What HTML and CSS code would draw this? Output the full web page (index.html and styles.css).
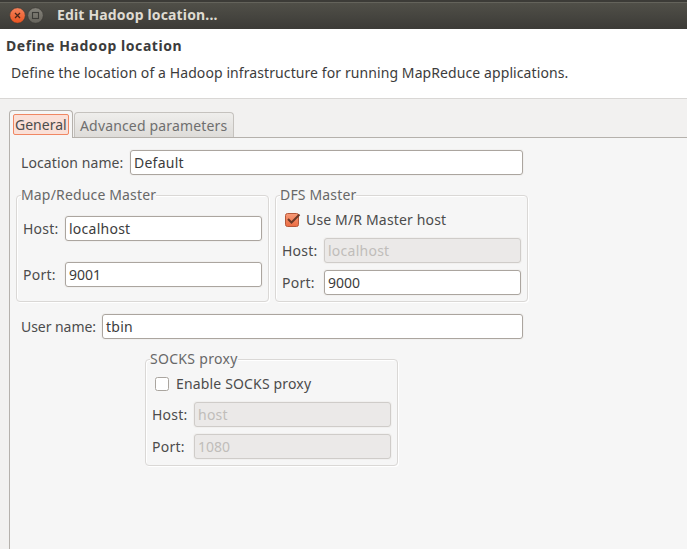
FILE: index.html
```html
<!DOCTYPE html>
<html lang="en">
<head>
<meta charset="utf-8">
<title>Edit Hadoop location...</title>
<link rel="stylesheet" href="styles.css">
</head>
<body>
<div class="titlebar">
  <svg class="window-buttons" width="36" height="18" viewBox="0 0 36 18">
    <defs>
      <linearGradient id="close" x1="0" y1="0" x2="0" y2="1"><stop offset="0" stop-color="#f5835c"/><stop offset="1" stop-color="#e9531f"/></linearGradient>
      <linearGradient id="max" x1="0" y1="0" x2="0" y2="1"><stop offset="0" stop-color="#85837b"/><stop offset="1" stop-color="#66645c"/></linearGradient>
    </defs>
    <circle cx="8.5" cy="9.5" r="7.8" fill="url(#close)" stroke="#3a3833" stroke-width=".7"/>
    <path d="M6 7l5 5M11 7l-5 5" stroke="#4b2619" stroke-width="1.3"/>
    <circle cx="26.5" cy="9.5" r="7.8" fill="url(#max)" stroke="#3a3833" stroke-width=".7"/>
    <rect x="23.5" y="6.5" width="6" height="6" fill="none" stroke="#3c3b37" stroke-width="1.1"/>
  </svg>
  <span class="window-title">Edit Hadoop location...</span>
</div>
<header class="banner">
  <h1 class="banner-title">Define Hadoop location</h1>
  <p class="banner-text">Define the location of a Hadoop infrastructure for running MapReduce applications.</p>
</header>
<main class="content">
  <nav class="tabs">
    <div class="tab-active"><span class="tab-focus">General</span></div>
    <div class="tab-idle">Advanced parameters</div>
  </nav>
  <section class="panel">
    <div class="row row-location"><span class="label">Location name:</span><div class="entry">Default</div></div>
    <div class="groups">
      <div class="group group-mr">
        <div class="legend">Map/Reduce Master</div>
        <div class="row"><span class="label">Host:</span><div class="entry">localhost</div></div>
        <div class="row"><span class="label">Port:</span><div class="entry numeric">9001</div></div>
      </div>
      <div class="group group-dfs">
        <div class="legend">DFS Master</div>
        <div class="check">
          <svg class="box" width="17" height="16" viewBox="0 0 17 16">
            <defs><linearGradient id="chk" x1="0" y1="0" x2="0" y2="1"><stop offset="0" stop-color="#f69a78"/><stop offset="1" stop-color="#ec6c42"/></linearGradient></defs>
            <rect x="1.5" y="1.5" width="13" height="13" rx="2" fill="url(#chk)" stroke="#b5583a"/>
            <path d="M4 7L7.5 10.5L15.5 2.5" fill="none" stroke="#6b3826" stroke-width="2"/>
          </svg>
          <span>Use M/R Master host</span>
        </div>
        <div class="row"><span class="label">Host:</span><div class="entry disabled">localhost</div></div>
        <div class="row"><span class="label">Port:</span><div class="entry numeric">9000</div></div>
      </div>
    </div>
    <div class="row row-user"><span class="label">User name:</span><div class="entry">tbin</div></div>
    <div class="group group-socks">
      <div class="legend">SOCKS proxy</div>
      <div class="check">
        <svg class="box" width="17" height="16" viewBox="0 0 17 16">
          <rect x="1.5" y="1.5" width="13" height="13" rx="2" fill="#fff" stroke="#aaa59f"/>
        </svg>
        <span>Enable SOCKS proxy</span>
      </div>
      <div class="row"><span class="label">Host:</span><div class="entry disabled">host</div></div>
      <div class="row"><span class="label">Port:</span><div class="entry disabled numeric">1080</div></div>
    </div>
  </section>
</main>
</body>
</html>
```
FILE: styles.css
```css
* { box-sizing: border-box; }

body {
  margin: 0;
  width: 687px;
  height: 549px;
  overflow: hidden;
  display: flex;
  flex-direction: column;
  background: #f2f1f0;
  color: #4c4c4c;
  font: 14px/18px "Noto Sans", "Open Sans", sans-serif;
  letter-spacing: 0.16px;
  white-space: nowrap;
}

.titlebar {
  flex: none;
  height: 29px;
  display: flex;
  align-items: center;
  padding: 1px 0 0 9px;
  background: linear-gradient(#3c3b37 0 2px, #64635b 2px 3px, #504f48 3px, #3c3b37 100%);
  color: #dfdbd2;
  font-weight: 700;
}
.window-buttons { margin-right: 12px; }

.banner {
  flex: none;
  height: 70px;
  padding: 8px 0 0 6px;
  background: #fff;
  border-bottom: 1px solid #d9d7d5;
}
.banner-title {
  margin: 0;
  font-size: 14px;
  line-height: 18px;
  letter-spacing: 0.56px;
  color: #3c3c3c;
}
.banner-text {
  margin: 9px 0 0 5px;
  letter-spacing: 0.09px;
  color: #3c3c3c;
}

.content {
  flex: 1;
  display: flex;
  flex-direction: column;
  padding: 11px 0 0 9px;
}

.tabs { display: flex; align-items: flex-end; height: 27px; }
.tab-active {
  width: 64px;
  height: 28px;
  margin-bottom: -1px;
  padding: 3px;
  border: 1px solid #b5b1ac;
  border-bottom: 0;
  border-radius: 4px 4px 0 0;
  background: #f6f6f6;
  z-index: 1;
}
.tab-focus {
  display: block;
  width: 56px;
  height: 21px;
  padding-left: 1px;
  line-height: 20px;
  letter-spacing: 0;
  border: 1px solid #f08763;
  border-radius: 2px;
  background: #fae0d8;
}
.tab-idle {
  width: 160px;
  height: 25px;
  margin-left: 1px;
  padding-left: 5px;
  line-height: 25px;
  border: 1px solid #c5c2be;
  border-bottom: 0;
  border-radius: 4px 4px 0 0;
  background: linear-gradient(#efeeec, #dedcd9);
  color: #6f6f6f;
}

.panel {
  flex: 1;
  padding: 12px 0 0 6px;
  border: 1px solid #b5b1ac;
  border-width: 1px 0 0 1px;
  background: #f6f6f6;
}

.row { display: flex; align-items: center; height: 25px; }
.label { flex: none; width: 42px; letter-spacing: 0.25px; }
.entry {
  flex: none;
  width: 197px;
  height: 25px;
  padding-left: 3px;
  line-height: 23px;
  letter-spacing: 0.25px;
  border: 1px solid #aba59f;
  border-radius: 3px;
  background: #fff;
  box-shadow: 0 0 0 1px #f1f0ef;
  color: #3c3c3c;
}
.entry.numeric { letter-spacing: 0; }
.entry.disabled { border-color: #cfccc9; background: #ebe9e8; color: #c0bdba; }

.row-location, .row-user { padding-left: 5px; }
.row-location .label { width: 109px; letter-spacing: 0.1px; }
.row-location .entry { width: 393px; }
.row-user { margin-top: 12px; }
.row-user .label { width: 81px; letter-spacing: -0.05px; }
.row-user .entry { width: 421px; }

.groups { display: flex; gap: 6px; margin-top: 20px; }
.group {
  width: 253px;
  height: 107px;
  padding-left: 6px;
  border: 1px solid #dad8d6;
  border-radius: 4px;
  box-shadow: 1px 1px 0 #fff, inset 1px 1px 0 #fff;
}
.legend {
  width: max-content;
  height: 18px;
  margin: -10px 0 0 -2px;
  background: #f6f6f6;
  color: #686868;
}
.group-mr .row { margin-top: 12px; }
.group-mr .row + .row { margin-top: 21px; }
.group-socks { margin: 20px 0 0 129px; }
.group-socks .legend { letter-spacing: 0.3px; }

.check { display: flex; align-items: center; height: 18px; margin: 7px 0 0 2px; }
.box { margin-right: 5px; }
.check + .row { margin-top: 9px; }
.check + .row + .row { margin-top: 7px; }
```
